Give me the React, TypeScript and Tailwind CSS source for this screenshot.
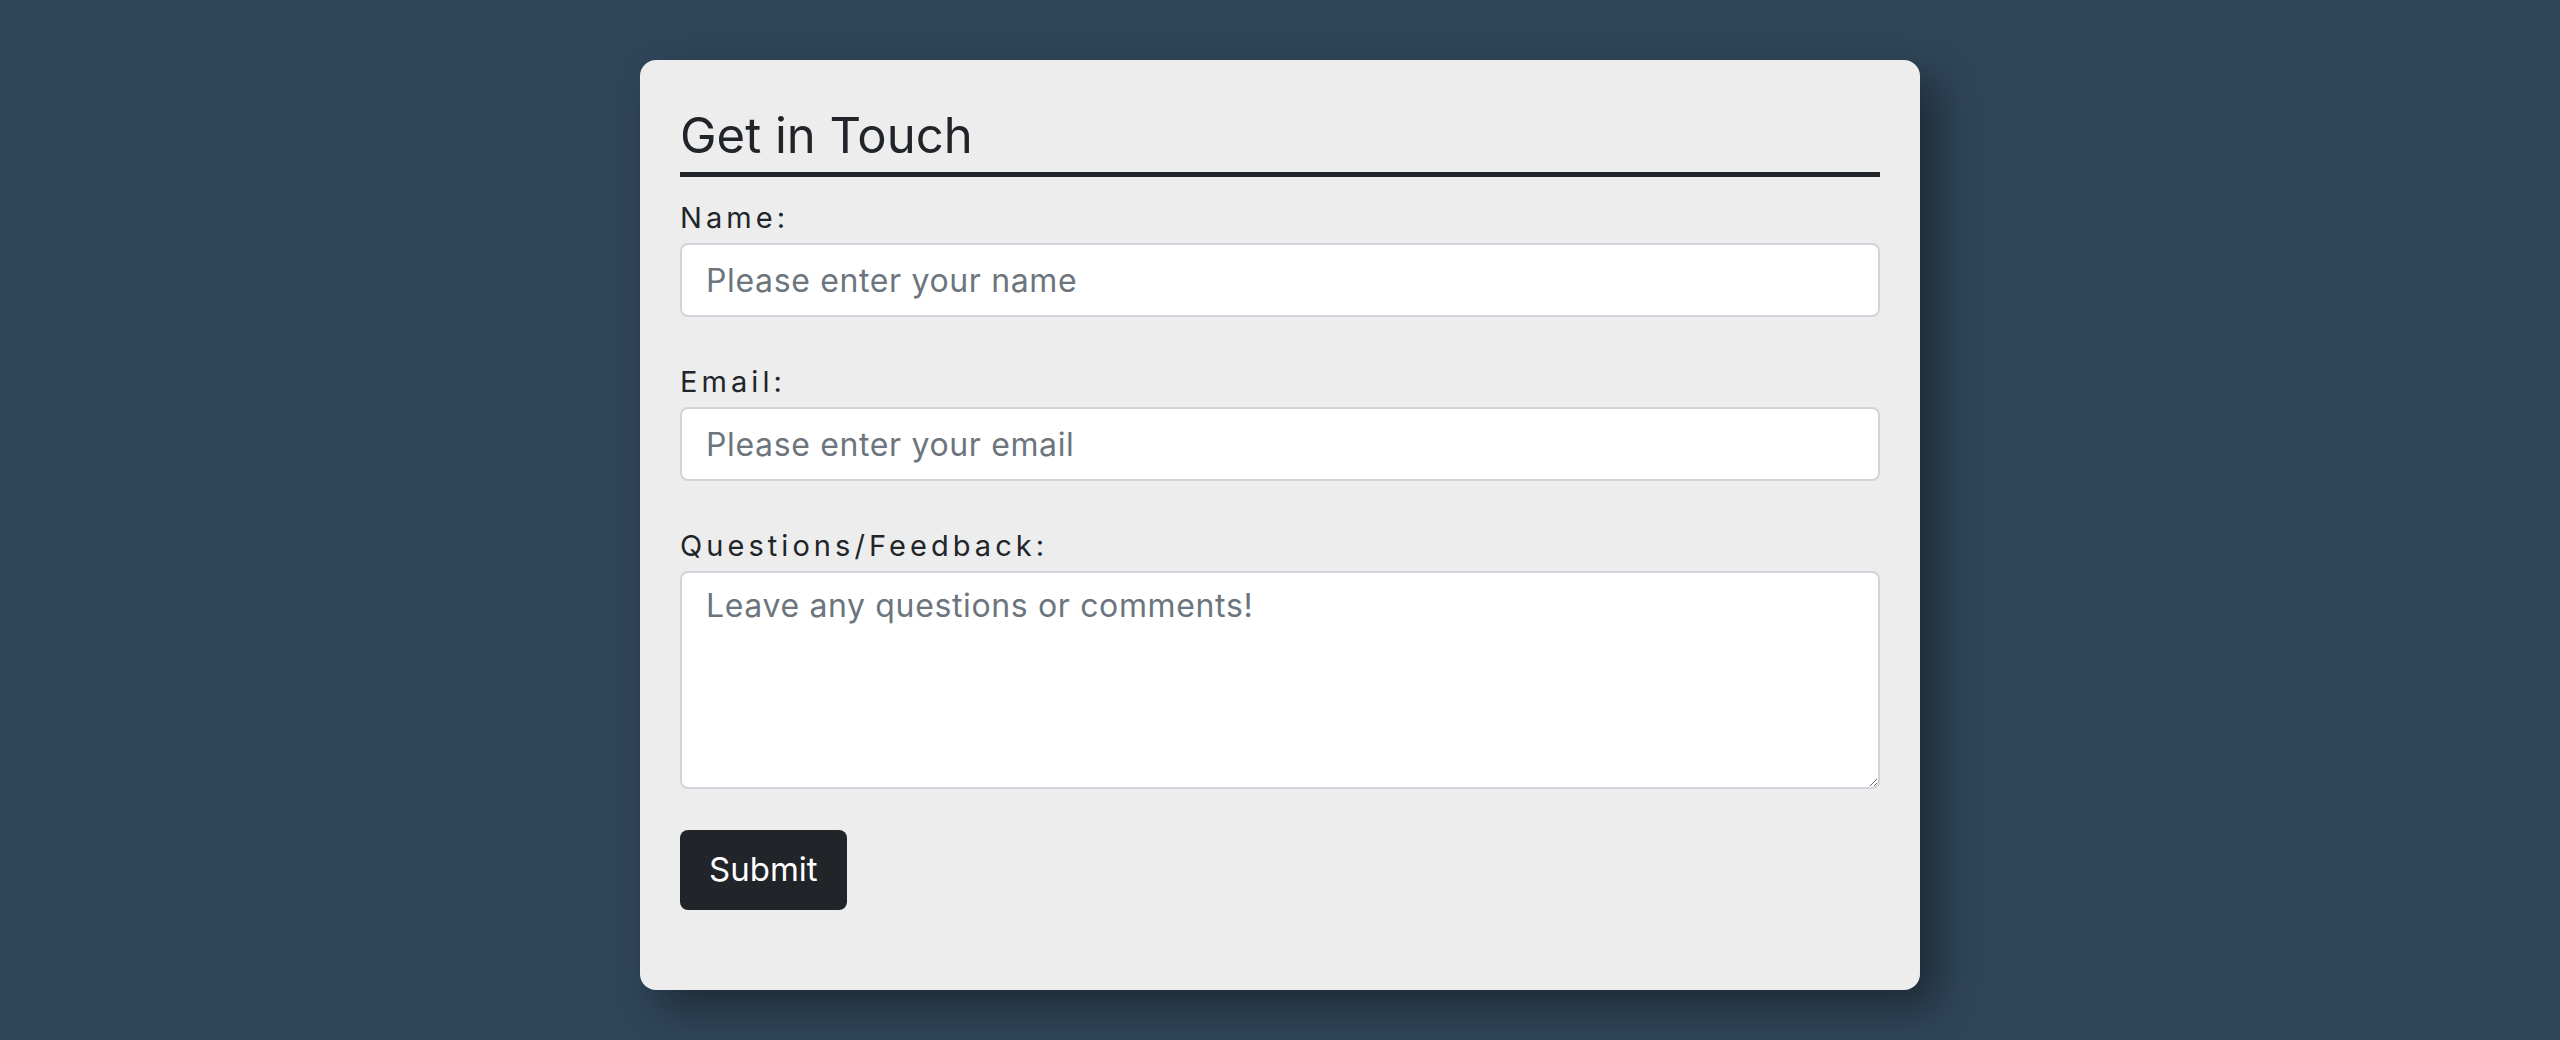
import { useState } from "react";

const labelClass =
  "block text-[29px] leading-[36px] tracking-[0.14em] text-[#212529] mb-[7px]";

const fieldClass =
  "block w-full rounded-lg border-2 border-[#ced4da] bg-white px-6 text-[32px] tracking-[0.02em] text-[#212529] placeholder:text-[#6c757d] outline-none";

export default function App() {
  const [name, setName] = useState("");
  const [email, setEmail] = useState("");
  const [message, setMessage] = useState("");

  return (
    <div className="min-h-screen bg-[#2f4559] pt-[60px] font-['Inter','Liberation_Sans',sans-serif]">
      <div className="mx-auto w-[1280px] rounded-2xl bg-[#ededed] px-10 pt-10 pb-20 shadow-[18px_18px_40px_rgba(0,0,0,0.38)]">
        <h2 className="border-b-[5px] border-[#212529] pt-[7px] pb-[7px] text-[49px] leading-[58px] font-normal text-[#212529]">
          Get in Touch
        </h2>

        <form onSubmit={(event) => event.preventDefault()}>
          <div className="mt-[23px]">
            <label htmlFor="name" className={labelClass}>
              Name:
            </label>
            <input
              id="name"
              type="text"
              value={name}
              onChange={(event) => setName(event.target.value)}
              placeholder="Please enter your name"
              className={`${fieldClass} h-[74px]`}
            />
          </div>

          <div className="mt-[47px]">
            <label htmlFor="email" className={labelClass}>
              Email:
            </label>
            <input
              id="email"
              type="email"
              value={email}
              onChange={(event) => setEmail(event.target.value)}
              placeholder="Please enter your email"
              className={`${fieldClass} h-[74px]`}
            />
          </div>

          <div className="mt-[47px]">
            <label htmlFor="message" className={labelClass}>
              Questions/Feedback:
            </label>
            <textarea
              id="message"
              value={message}
              onChange={(event) => setMessage(event.target.value)}
              placeholder="Leave any questions or comments!"
              className={`${fieldClass} h-[218px] pt-[9px] leading-[48px] resize`}
            />
          </div>

          <button
            type="submit"
            className="mt-[41px] h-20 rounded-lg bg-[#212529] px-[29px] text-[33px] text-white"
          >
            Submit
          </button>
        </form>
      </div>
    </div>
  );
}
